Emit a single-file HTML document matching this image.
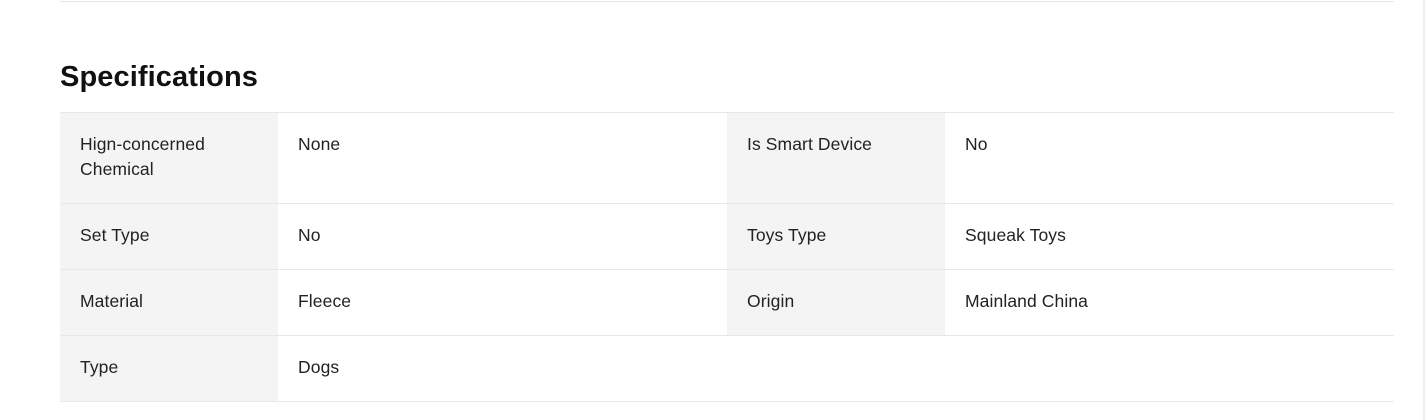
<!DOCTYPE html>
<html><head><style>
html,body{margin:0;padding:0;background:#fff;width:1425px;height:420px;overflow:hidden}
body{font-family:"Liberation Sans",sans-serif;color:#222;position:relative}
.top{position:absolute;left:60px;width:1334px;top:1px;height:1px;background:#e6e6e6}
.sb{position:absolute;left:1423px;top:0;width:2px;height:420px;background:#f0f0f0}
h2{position:absolute;left:60px;top:61px;margin:0;font-size:29px;font-weight:bold;color:#111;letter-spacing:0.1px}
table{position:absolute;left:60px;top:112px;width:1334px;border-collapse:collapse;table-layout:fixed;font-size:17.5px;line-height:25px;letter-spacing:0.1px}
td{vertical-align:top;padding:19px 20px 21px;border-top:1px solid #e8e8e8;border-bottom:1px solid #e8e8e8}
td.l{background:#f4f4f4;width:178px}
td.v{width:409px}
</style></head><body>
<div class="top"></div><div class="sb"></div>
<h2>Specifications</h2>
<table>
<tr style="height:91px"><td class="l">Hign-concerned Chemical</td><td class="v">None</td><td class="l">Is Smart Device</td><td class="v">No</td></tr>
<tr style="height:66px"><td class="l">Set Type</td><td class="v">No</td><td class="l">Toys Type</td><td class="v">Squeak Toys</td></tr>
<tr style="height:66px"><td class="l">Material</td><td class="v">Fleece</td><td class="l">Origin</td><td class="v">Mainland China</td></tr>
<tr style="height:66px"><td class="l">Type</td><td class="v">Dogs</td><td></td><td></td></tr>
</table>
</body></html>
